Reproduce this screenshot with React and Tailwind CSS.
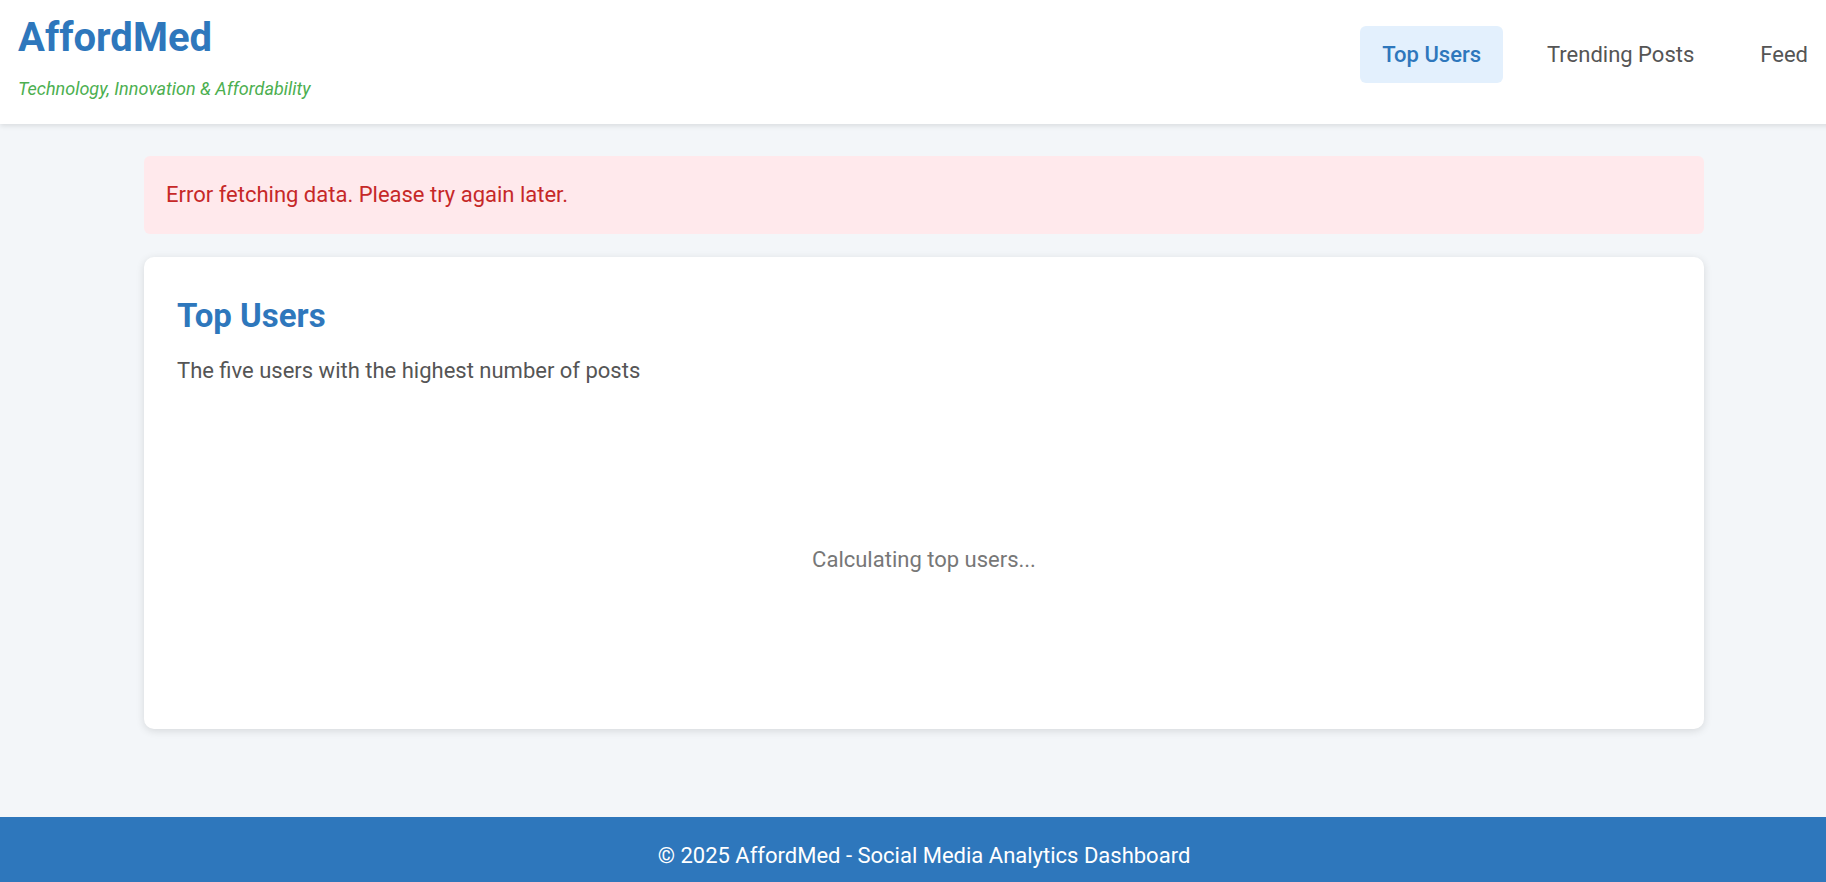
export default function App() {
  const navItems = ["Top Users", "Trending Posts", "Feed"];
  const active = "Top Users";

  return (
    <div className="min-h-screen min-w-[1848px] bg-[#f3f6f9] font-['Roboto',sans-serif]">
      {/* Header */}
      <header className="h-[124px] bg-white shadow-[0_2px_5px_rgba(0,0,0,0.1)] flex items-start justify-between px-[18px] pt-[14px] relative z-10">
        <div>
          <h1 className="text-[40px] leading-[48px] font-bold text-[#2e77bc]">AffordMed</h1>
          <p className="mt-[13px] text-[18px] leading-[27px] italic text-[#4caf50]">
            Technology, Innovation &amp; Affordability
          </p>
        </div>
        <nav className="flex gap-[22px] mt-[12px]">
          {navItems.map((item) => (
            <button
              key={item}
              className={
                item === active
                  ? "h-[57px] px-[22px] rounded-md bg-[#e3f0fd] text-[#2e77bc] text-[22px] font-medium"
                  : "h-[57px] px-[22px] rounded-md text-[#555] text-[22px]"
              }
            >
              {item}
            </button>
          ))}
        </nav>
      </header>

      {/* Main */}
      <main className="px-[144px] pt-[32px] pb-[88px]">
        <div className="bg-[#ffe9ec] rounded-md px-[22px] py-[22px] text-[22px] leading-[34px] text-[#c62828]">
          Error fetching data. Please try again later.
        </div>

        <section className="mt-[23px] bg-white rounded-[10px] shadow-[0_2px_8px_rgba(0,0,0,0.12)] px-[33px] pt-[39px] pb-[28px]">
          <h2 className="text-[33px] leading-[40px] font-bold text-[#2e77bc]">Top Users</h2>
          <p className="mt-[18px] text-[22px] leading-[33px] text-[#555]">
            The five users with the highest number of posts
          </p>
          <div className="mt-[30px] h-[284px] flex items-center justify-center text-[22px] text-[#777]">
            Calculating top users...
          </div>
        </section>
      </main>

      {/* Footer */}
      <footer className="bg-[#2e77bc] text-white text-center text-[22px] leading-[33px] py-[22px]">
        © 2025 AffordMed - Social Media Analytics Dashboard
      </footer>
    </div>
  );
}
